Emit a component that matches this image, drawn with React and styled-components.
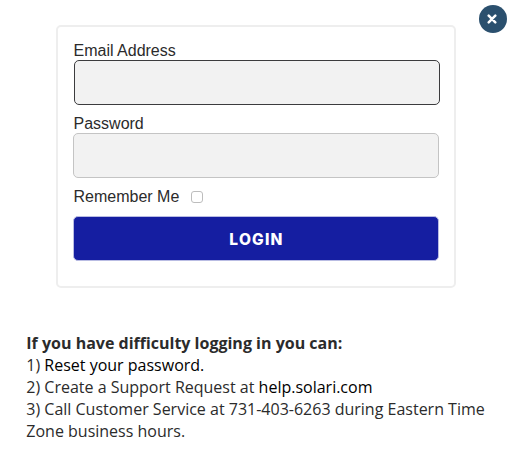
import React, { useState } from 'react';
import styled, { createGlobalStyle } from 'styled-components';

const GlobalStyle = createGlobalStyle`
  * {
    box-sizing: border-box;
  }

  body {
    margin: 0;
    background: #fff;
    color: #2b2b2b;
    font-family: "Open Sans", "Noto Sans", sans-serif;
    font-size: 16px;
  }
`;

const Modal = styled.main`
  position: relative;
  height: 466px;
  padding: 25px 26px 0;
  overflow: hidden;
`;

const Close = styled.button`
  position: absolute;
  top: 5px;
  right: 5px;
  display: flex;
  align-items: center;
  justify-content: center;
  width: 28px;
  height: 28px;
  padding: 0 2px 1px 0;
  border: 0;
  border-radius: 50%;
  background: #2b506e;
`;

const Form = styled.form`
  display: flex;
  flex-direction: column;
  width: 400px;
  height: 263px;
  margin-left: 30px;
  padding: 14px 15px 0;
  border: 2px solid #eee;
  border-radius: 5px;
`;

const Label = styled.label`
  height: 19px;
  padding-left: 0.5px;
  font-family: "Liberation Sans", Arial, sans-serif;
  font-size: 16px;
  line-height: 19px;
`;

const Input = styled.input`
  width: 366px;
  height: 45px;
  margin: 0 0 ${props => (props.$active ? '9px' : '10px')} ${props => (props.$active ? '1px' : '0')};
  padding: 0 12px;
  border: 1px solid ${props => (props.$active ? '#3c3c3e' : '#c4c4c4')};
  border-radius: 5px;
  background: #f2f2f2;
  font-size: 16px;
  outline: none;
`;

const Remember = styled.div`
  display: flex;
  align-items: flex-start;
  height: 19px;
  margin: -1px 0 10px;
`;

const Checkbox = styled.input`
  appearance: none;
  width: 12px;
  height: 12px;
  margin: 4px 0 0 11.5px;
  border: 1px solid #bdbdbd;
  border-radius: 3px;
  background: #fff;
`;

const Submit = styled.button`
  width: 366px;
  height: 45px;
  padding: 1px 0 0 1px;
  border: 1px solid #b9bce3;
  border-radius: 5px;
  background: #151ea1;
  color: #fff;
  font-family: Inter, sans-serif;
  font-size: 15.5px;
  font-weight: 800;
  letter-spacing: 1.2px;
`;

const Help = styled.section`
  margin-top: 44px;
  padding-left: 0.3px;
  line-height: 22px;
`;

const Line = styled.p`
  margin: 0;
  white-space: nowrap;
`;

const Title = styled(Line)`
  font-weight: 700;
`;

const Link = styled.a`
  color: #000;
  text-decoration: none;
`;

function App() {
  const [remember, setRemember] = useState(false);

  return (
    <Modal>
      <GlobalStyle />
      <Close type="button" aria-label="Close">
        <svg width="10" height="10" viewBox="0 0 10 10">
          <path d="M1.7 1.7L8.3 8.3M8.3 1.7L1.7 8.3" stroke="#fff" strokeWidth="2.5" strokeLinecap="round" />
        </svg>
      </Close>
      <Form onSubmit={e => e.preventDefault()}>
        <Label htmlFor="email">Email Address</Label>
        <Input id="email" type="email" $active />
        <Label htmlFor="password">Password</Label>
        <Input id="password" type="password" />
        <Remember>
          <Label htmlFor="remember">Remember Me</Label>
          <Checkbox
            id="remember"
            type="checkbox"
            checked={remember}
            onChange={e => setRemember(e.target.checked)}
          />
        </Remember>
        <Submit type="submit">LOGIN</Submit>
      </Form>
      <Help>
        <Title>If you have difficulty logging in you can:</Title>
        <Line>1) <Link>Reset your password.</Link></Line>
        <Line>2) Create a Support Request at <Link>help.solari.com</Link></Line>
        <Line>3) Call Customer Service at 731-403-6263 during Eastern Time<br />Zone business hours.</Line>
      </Help>
    </Modal>
  );
}

export default App;
